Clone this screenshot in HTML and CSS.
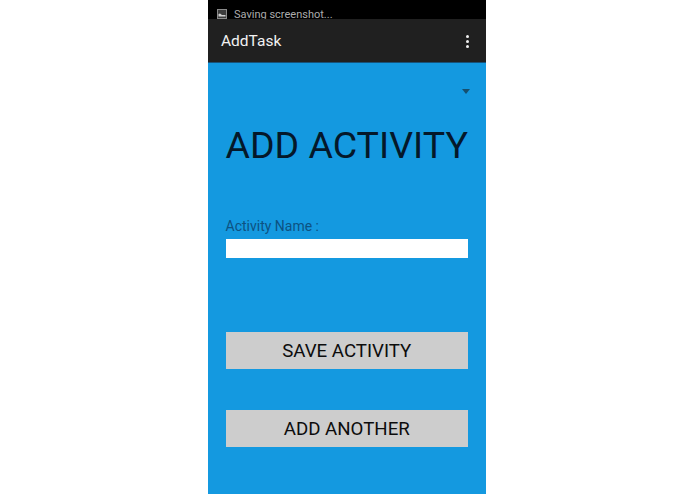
FILE: index.html
```html
<!DOCTYPE html>
<html lang="en">
<head>
    <meta charset="UTF-8">
    <meta name="viewport" content="width=device-width, initial-scale=1.0">
    <title>AddTask</title>
    <link rel="stylesheet" href="styles.css">
</head>
<body>
    <div class="phone">
        <!-- Status bar with the screenshot notification -->
        <div class="status-bar">
            <svg class="status-icon" width="10" height="10" viewBox="0 0 10 10">
                <rect x="0.5" y="0.5" width="9" height="9" fill="#3c3c3c" stroke="#8a8a8a"/>
                <path d="M1.5 7.5 L1.5 5 L3 4.5 L5 6 L8.5 6 L8.5 7.5 Z" fill="#d0d0d0"/>
            </svg>
            <span class="status-text">Saving screenshot...</span>
        </div>

        <!-- Action bar -->
        <div class="action-bar">
            <span class="app-title">AddTask</span>
            <div class="overflow-menu">
                <span class="dot"></span>
                <span class="dot"></span>
                <span class="dot"></span>
            </div>
        </div>

        <div class="content">
            <div class="spinner-row">
                <span class="spinner-arrow"></span>
            </div>
            <h1 class="heading">ADD ACTIVITY</h1>
            <label class="field-label" for="activity-name">Activity Name :</label>
            <input type="text" class="field-input" id="activity-name">
            <button class="save-button">SAVE ACTIVITY</button>
            <button class="add-button">ADD ANOTHER</button>
        </div>
    </div>
</body>
</html>
```

FILE: styles.css
```css
/* Phone screen centered on a white page */
html, body {
    height: 100%;
}
body {
    margin: 0;
    background: #fff;
    font-family: Roboto, "Liberation Sans", sans-serif;
    display: flex;
    justify-content: center;
    overflow: hidden;
}
.phone {
    width: 278px;
    height: 494px;
    margin-right: 1px;
    display: flex;
    flex-direction: column;
    background: #1499e0;
}
.status-bar {
    height: 19px;
    background: #000;
    display: flex;
    align-items: center;
    gap: 7px;
    padding: 9px 0 0 9px;
    box-sizing: border-box;
}
.status-icon {
    flex-shrink: 0;
}
.status-text {
    font-size: 11px;
    line-height: 13px;
    color: #acacac;
}
/* Sits on top of the status bar so the notification text is cut as in the capture */
.action-bar {
    position: relative;
    height: 42px;
    background: #202020;
    border-bottom: 1px solid #17527a;
    display: flex;
    align-items: center;
    justify-content: space-between;
    padding: 1px 17px 0 13px;
    box-sizing: content-box;
}
.app-title {
    font-size: 15.5px;
    color: #f2f2f2;
}
.overflow-menu {
    display: flex;
    flex-direction: column;
    gap: 2px;
}
.dot {
    width: 3px;
    height: 3px;
    border-radius: 50%;
    background: #f0f0f0;
}
.content {
    flex: 1;
    display: flex;
    flex-direction: column;
    padding: 0 18px 0 17.5px;
}
.spinner-row {
    display: flex;
    justify-content: flex-end;
    padding: 26px 0 0;
    height: 5px;
}
.spinner-arrow {
    width: 0;
    height: 0;
    border-left: 4px solid transparent;
    border-right: 4px solid transparent;
    border-top: 5px solid #16506f;
    margin-right: -2px;
}
.heading {
    margin: 29px 0 0;
    font-size: 37.5px;
    font-weight: 400;
    line-height: 44px;
    color: #04182a;
    white-space: nowrap;
}
.field-label {
    margin-top: 50px;
    font-size: 14px;
    line-height: 18px;
    color: #0d5282;
}
.field-input {
    margin-top: 4px;
    height: 19px;
    box-sizing: border-box;
    width: 100%;
    border: none;
    background: #fff;
    padding: 0;
}
button {
    width: 100%;
    height: 37px;
    border: none;
    padding: 1px 0 0;
    background: #cdcdcd;
    color: #0c0c0c;
    font-family: inherit;
    font-size: 18.7px;
}
.save-button {
    margin-top: 74px;
}
.add-button {
    margin-top: 41px;
}
```
